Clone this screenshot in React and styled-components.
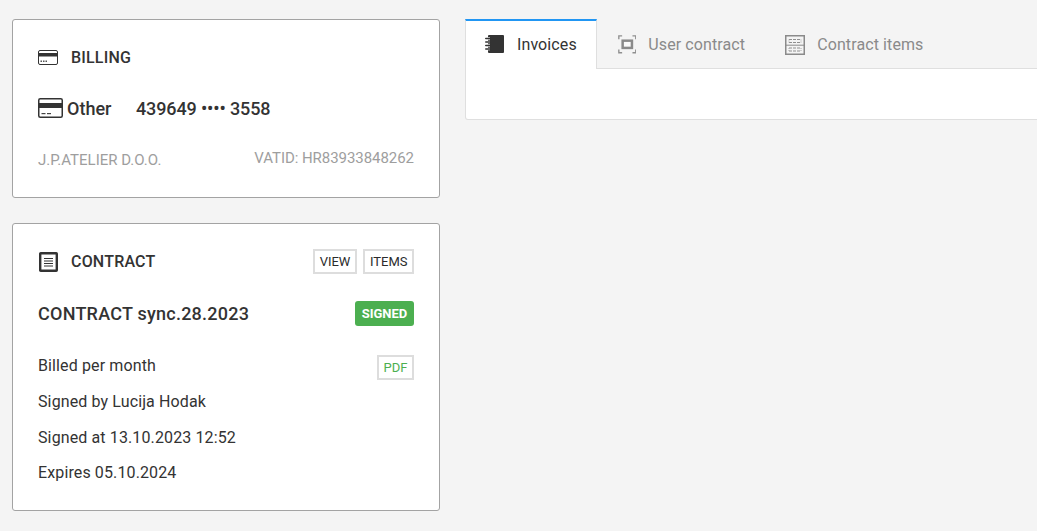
import React from "react";
import styled, { createGlobalStyle } from "styled-components";

const Global = createGlobalStyle`
  html, body { margin: 0; padding: 0; background: #f4f4f4; overflow: hidden; }
  body { font-family: Roboto, "Liberation Sans", sans-serif; color: #333; }
`;
const Page = styled.div`
  display: flex; align-items: flex-start; gap: 25px;
  padding: 19px 0 0 12px; width: 1037px; height: 531px; box-sizing: border-box; overflow: hidden;
`;
const Column = styled.div`
  width: 428px; flex: none; display: flex; flex-direction: column; gap: 25px;
`;
const Card = styled.section`
  background: #fff; border: 1px solid #a3a3a3; border-radius: 3px; box-sizing: border-box;
  height: ${p => p.$h}px; padding: 25px; display: flex; flex-direction: column;
`;
const Header = styled.div`
  display: flex; align-items: center; height: 25px; justify-content: space-between;
`;
const HeaderTitle = styled.div`
  display: flex; align-items: center; gap: 13px; font-size: 16px; font-weight: 500; color: #333;
  letter-spacing: .2px;
`;
const IconSlot = styled.span`
  display: inline-flex; width: 20px; justify-content: center; flex: none;
`;
const CardLine = styled.div`
  display: flex; align-items: center; margin-top: 26px; height: 24px;
  font-size: 18px; font-weight: 500; color: #333;
`;
const CardKind = styled.span`
  margin-left: 4px; width: 69px;
`;
const CardNumber = styled.span`
  letter-spacing: -.13px;
`;
const MetaRow = styled.div`
  display: flex; justify-content: space-between; align-items: flex-start; margin-top: 26px;
  font-size: 15px; color: #9e9e9e; height: 24px;
`;
const MetaLeft = styled.span`
  margin-top: 5px;
`;
const MetaRight = styled.span`
  margin-top: 3px; letter-spacing: -.05px;
`;
const Actions = styled.div`
  display: flex; gap: 6px;
`;
const OutlineButton = styled.span`
  display: inline-flex; align-items: center; justify-content: center; box-sizing: border-box;
  height: 25px; padding: 0 ${p => p.$pad || 4.5}px; border: 2px solid #ddd; background: #fff;
  font-size: 13px; color: ${p => p.$color || "#2b2b2b"};
`;
const ContractRow = styled.div`
  display: flex; align-items: center; justify-content: space-between; margin-top: 27px; height: 25px;
`;
const ContractName = styled.div`
  font-size: 18px; font-weight: 500; color: #333; letter-spacing: .24px;
`;
const Badge = styled.span`
  display: inline-flex; align-items: center; justify-content: center; height: 25px; width: 59px;
  background: #4caf50; color: #fff; font-size: 13px; font-weight: 700; border-radius: 3px;
`;
const Details = styled.div`
  margin-top: 30px; display: flex; flex-direction: column;
`;
const DetailRow = styled.div`
  display: flex; justify-content: space-between; align-items: flex-start; height: 35.8px;
  font-size: 16px; line-height: 20px; letter-spacing: .12px; color: #333;
`;
const PdfSlot = styled.span`
  margin-top: -1px; letter-spacing: 0;
`;
const Panel = styled.div`
  width: 620px; flex: none; height: 101px; background: #fff; border: 1px solid #dfdfdf;
  border-top: 0; border-radius: 0 0 3px 3px; box-sizing: border-box;
`;
const Tabs = styled.div`
  display: flex; height: 50px; margin-left: -1px; border-bottom: 1px solid #dfdfdf; background: #f4f4f4; box-sizing: border-box;
`;
const Tab = styled.div`
  display: flex; align-items: center; gap: 12px; box-sizing: border-box; height: ${p => (p.$active ? 50 : 49)}px;
  padding: ${p => (p.$active ? "0 19px 2px" : "0")}; margin-left: ${p => p.$ml || 0}px;
  font-size: 16px; letter-spacing: .1px; color: ${p => (p.$active ? "#333" : "#8a8a8a")};
  background: ${p => (p.$active ? "#fff" : "transparent")};
  border-top: ${p => (p.$active ? "2px solid #2196f3" : "2px solid transparent")};
  border-left: ${p => (p.$active ? "1px solid #dfdfdf" : "0")};
  border-right: ${p => (p.$active ? "1px solid #dfdfdf" : "0")};
`;

const CardSmall = () => (
  <svg width="20" height="15" viewBox="0 0 20 15">
    <rect x=".5" y=".5" width="19" height="14" rx="1.5" fill="#fff" stroke="#333" />
    <rect x="1" y="3" width="18" height="3.5" fill="#333" />
    <rect x="2.5" y="10.5" width="1.5" height="1.5" fill="#555" />
    <rect x="5" y="10.5" width="1.5" height="1.5" fill="#555" />
    <rect x="7.5" y="10.5" width="1.5" height="1.5" fill="#555" />
  </svg>
);
const CardLarge = () => (
  <svg width="25" height="20" viewBox="0 0 25 20" style={{ flex: "none" }}>
    <rect x=".75" y=".75" width="23.5" height="18.5" rx="1.5" fill="#fff" stroke="#333" strokeWidth="1.5" />
    <rect x="1" y="5" width="23" height="5" fill="#333" />
    <rect x="3.5" y="15" width="4" height="1.2" fill="#444" />
    <rect x="9" y="15" width="4" height="1.2" fill="#444" />
  </svg>
);
const DocIcon = () => (
  <svg width="19" height="20" viewBox="0 0 19 20">
    <rect x="1.2" y="1.2" width="16.6" height="17.6" rx=".5" fill="#fff" stroke="#333" strokeWidth="2.4" />
    <path d="M5 6.5h9M5 9h9M5 11.5h9M5 14h9" stroke="#333" strokeWidth="1" />
  </svg>
);
const NotebookIcon = () => (
  <svg width="20" height="20" viewBox="0 0 20 20">
    <rect x="3" y="1" width="16" height="18" rx="1" fill="#333" />
    <path d="M1 4.5h4M1 8h4M1 11.5h4M1 15h4" stroke="#fff" strokeWidth="2.6" />
    <path d="M.8 4.5h4.4M.8 8h4.4M.8 11.5h4.4M.8 15h4.4" stroke="#333" strokeWidth="1.6" strokeLinecap="round" />
  </svg>
);
const FocusIcon = () => (
  <svg width="18.6" height="18.6" viewBox="0 0 18 18" fill="none" style={{ flex: "none" }}>
    <rect x="4.5" y="5.5" width="9" height="7" fill="#fff" fillOpacity=".5" stroke="#8a8a8a" strokeWidth="2.4" />
    <path d="M.8 4V.8H4M14 .8h3.2V4M.8 14v3.2H4M14 17.2h3.2V14" stroke="#8f8f8f" strokeWidth="1.3" />
  </svg>
);
const TableIcon = () => (
  <svg width="20" height="20" viewBox="0 0 20 20" fill="none" style={{ flex: "none" }}>
    <rect x=".75" y=".75" width="18.5" height="18.5" stroke="#8a8a8a" strokeWidth="1.5" />
    <path d="M1 10.2h18" stroke="#8a8a8a" />
    <path d="M4 4.5h12M4 7.5h12M4 13h12M4 16h12" stroke="#8f8f8f" strokeDasharray="3 1" />
    <path d="M4 4.5v3M16 4.5v3M4 13v3M16 13v3" stroke="#a8a8a8" strokeDasharray="1 1" />
  </svg>
);

export default function App() {
  return (
    <Page>
      <Global />
      <Column>
        <Card $h={179}>
          <Header>
            <HeaderTitle>
              <IconSlot><CardSmall /></IconSlot>
              BILLING
            </HeaderTitle>
          </Header>
          <CardLine>
            <CardLarge />
            <CardKind>Other</CardKind>
            <CardNumber>439649 •••• 3558</CardNumber>
          </CardLine>
          <MetaRow>
            <MetaLeft>J.P.ATELIER D.O.O.</MetaLeft>
            <MetaRight>VATID: HR83933848262</MetaRight>
          </MetaRow>
        </Card>
        <Card $h={288}>
          <Header>
            <HeaderTitle>
              <IconSlot><DocIcon /></IconSlot>
              CONTRACT
            </HeaderTitle>
            <Actions>
              <OutlineButton $pad={5}>VIEW</OutlineButton>
              <OutlineButton>ITEMS</OutlineButton>
            </Actions>
          </Header>
          <ContractRow>
            <ContractName>CONTRACT sync.28.2023</ContractName>
            <Badge>SIGNED</Badge>
          </ContractRow>
          <Details>
            <DetailRow>
              Billed per month
              <PdfSlot><OutlineButton $color="#4caf50">PDF</OutlineButton></PdfSlot>
            </DetailRow>
            <DetailRow>Signed by Lucija Hodak</DetailRow>
            <DetailRow>Signed at 13.10.2023 12:52</DetailRow>
            <DetailRow>Expires 05.10.2024</DetailRow>
          </Details>
        </Card>
      </Column>
      <Panel>
        <Tabs>
          <Tab $active><NotebookIcon />Invoices</Tab>
          <Tab $ml={21}><FocusIcon />User contract</Tab>
          <Tab $ml={40}><TableIcon />Contract items</Tab>
        </Tabs>
      </Panel>
    </Page>
  );
}
